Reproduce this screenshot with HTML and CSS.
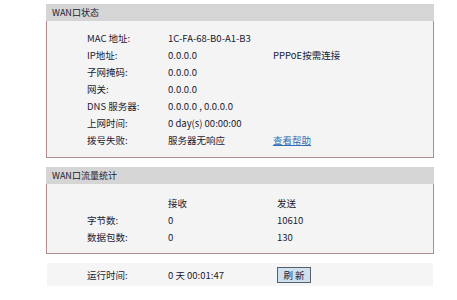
FILE: index.html
```html
<!DOCTYPE html>
<html lang="zh-CN">
<head>
    <meta charset="UTF-8">
    <title>运行状态</title>
    <link rel="stylesheet" href="styles.css">
</head>
<body>
    <div class="page">
        <div class="panel">
            <div class="panel-title">WAN口状态</div>
            <div class="panel-body wan-status">
                <span>MAC 地址:</span><span>1C-FA-68-B0-A1-B3</span><span></span>
                <span>IP地址:</span><span>0.0.0.0</span><span>PPPoE按需连接</span>
                <span>子网掩码:</span><span>0.0.0.0</span><span></span>
                <span>网关:</span><span>0.0.0.0</span><span></span>
                <span>DNS 服务器:</span><span>0.0.0.0 , 0.0.0.0</span><span></span>
                <span>上网时间:</span><span>0 day(s) 00:00:00</span><span></span>
                <span>拨号失败:</span><span>服务器无响应</span><a href="#" class="help-link">查看帮助</a>
            </div>
        </div>

        <div class="panel">
            <div class="panel-title">WAN口流量统计</div>
            <div class="panel-body traffic">
                <span></span><span>接收</span><span>发送</span>
                <span>字节数:</span><span>0</span><span>10610</span>
                <span>数据包数:</span><span>0</span><span>130</span>
            </div>
        </div>

        <div class="runtime-bar">
            <span>运行时间:</span>
            <span>0 天 00:01:47</span>
            <span><button class="refresh-button">刷 新</button></span>
        </div>
    </div>
</body>
</html>
```

FILE: styles.css
```css
body {
    margin: 0;
    background-color: #ffffff;
    font-family: 'Noto Sans CJK SC', sans-serif;
    font-size: 9.5px;
    color: #1a1a33;
}
.page {
    width: 388px;
    margin-left: 46px;
    padding-top: 4px;
}
.panel {
    margin-bottom: 9px;
}
.panel-title {
    background-color: #d5d5d5;
    height: 17px;
    line-height: 17px;
    padding-left: 6px;
    font-size: 9px;
}
.panel-body {
    background-color: #f4f4f4;
    border: 1px solid #b28e8e;
    border-top: none;
    display: grid;
    grid-template-columns: 81px 105px 1fr;
    grid-auto-rows: 17px;
    align-items: center;
    padding-left: 40px;
}
.wan-status {
    padding-top: 8px;
    padding-bottom: 9px;
}
.traffic {
    padding-top: 10px;
    padding-bottom: 8px;
    grid-template-columns: 81px 109px 1fr;
}
.help-link {
    color: #2f6db5;
    text-decoration: underline;
}
.runtime-bar {
    background-color: #f5f5f5;
    margin: 0 1px;
    height: 23px;
    display: grid;
    grid-template-columns: 81px 109px 1fr;
    align-items: center;
    padding-left: 40px;
}
.refresh-button {
    font-family: 'Noto Sans CJK SC', sans-serif;
    font-size: 9.5px;
    color: #1a1a33;
    background-color: #cfe0ee;
    border: 1px solid #55606a;
    padding: 0 4px;
    height: 16px;
    line-height: 14px;
    width: 34px;
}
```
